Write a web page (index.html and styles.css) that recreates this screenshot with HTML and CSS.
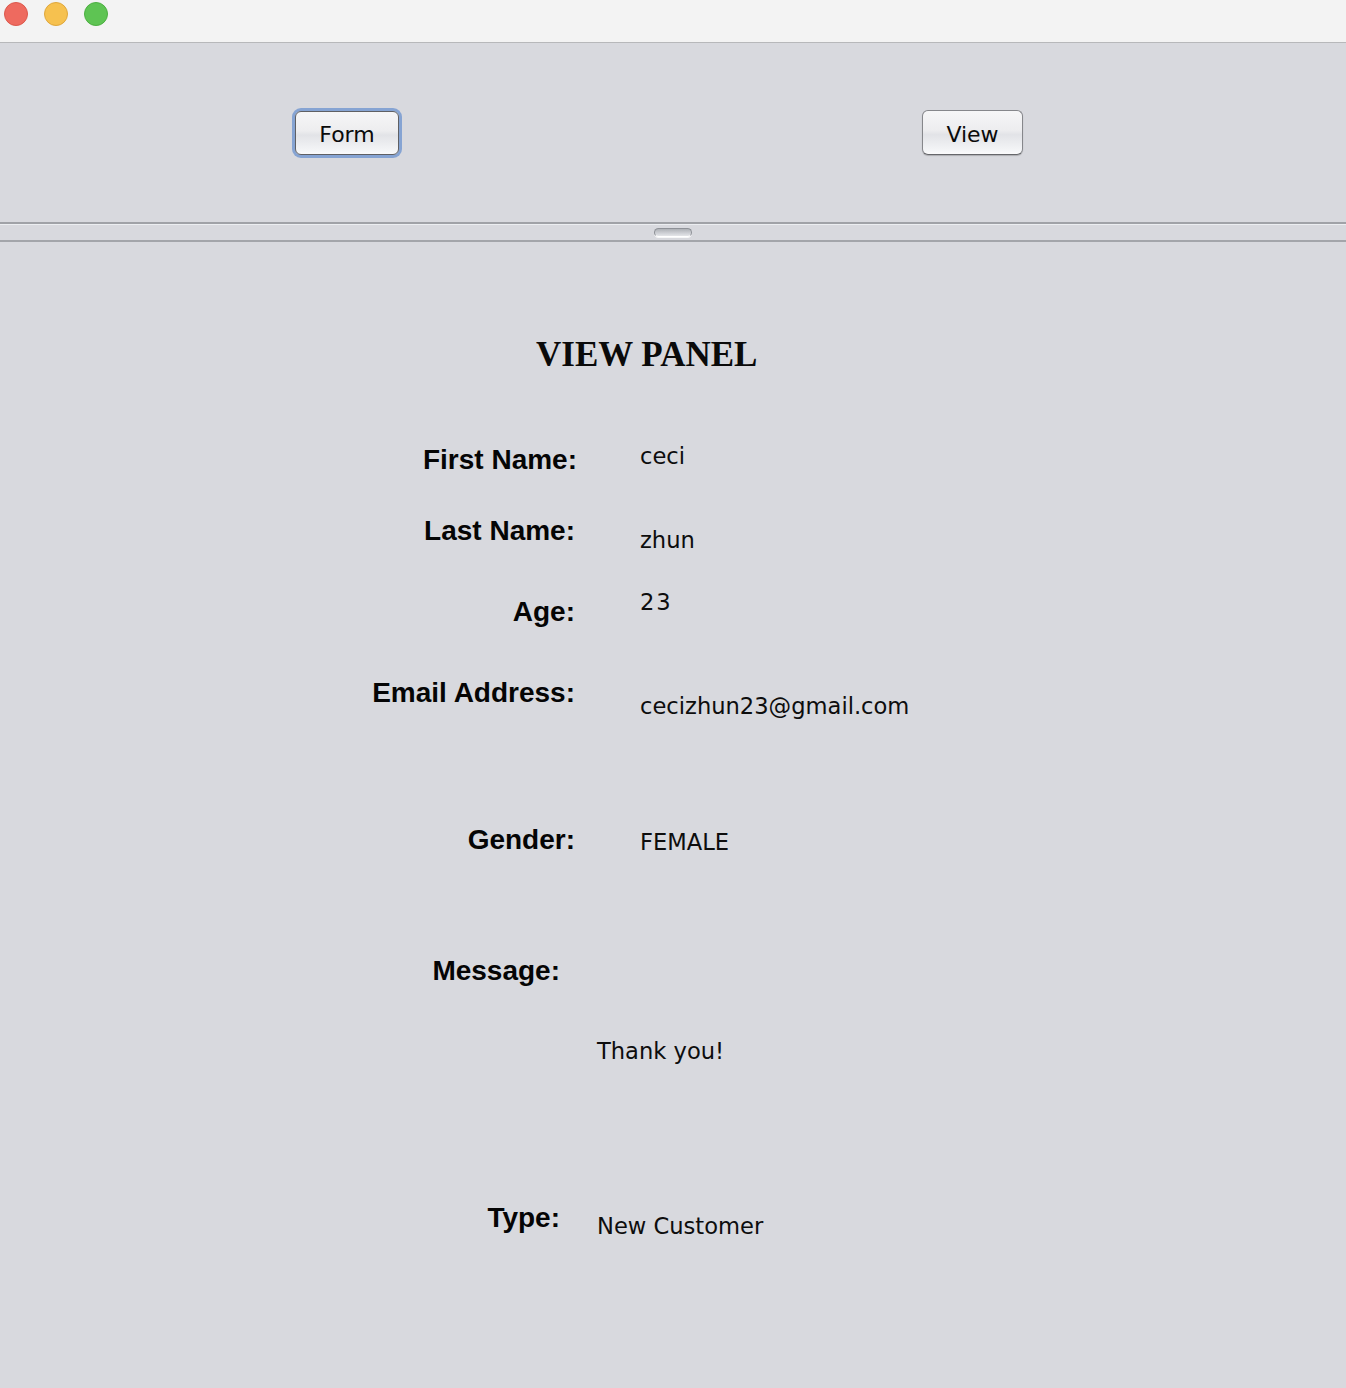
FILE: index.html
```html
<!DOCTYPE html>
<html lang="en">
<head>
<meta charset="utf-8">
<title>View Panel</title>
<link rel="stylesheet" href="styles.css">
</head>
<body>
<div class="window">
  <header class="titlebar">
    <span class="light red"></span>
    <span class="light yellow"></span>
    <span class="light green"></span>
  </header>
  <nav class="toolbar">
    <button class="btn btn-form focused">Form</button>
    <button class="btn btn-view">View</button>
  </nav>
  <div class="splitter"><span class="handle"></span></div>
  <main class="panel">
    <h1 class="title">VIEW PANEL</h1>
    <div class="row r1"><span class="label">First Name:</span><span class="value">ceci</span></div>
    <div class="row r2"><span class="label">Last Name:</span><span class="value">zhun</span></div>
    <div class="row r3"><span class="label">Age:</span><span class="value">23</span></div>
    <div class="row r4"><span class="label">Email Address:</span><span class="value">cecizhun23@gmail.com</span></div>
    <div class="row r5"><span class="label">Gender:</span><span class="value">FEMALE</span></div>
    <div class="row b r6"><span class="label">Message:</span></div>
    <div class="row b r7"><span class="value only">Thank you!</span></div>
    <div class="row b r8"><span class="label">Type:</span><span class="value">New Customer</span></div>
  </main>
</div>
</body>
</html>
```
FILE: styles.css
```css
html, body {
  margin: 0;
  padding: 0;
  background: #d8d9de;
}
.window {
  width: 1346px;
  min-height: 1388px;
  background: #d8d9de;
}
.titlebar {
  height: 43px;
  box-sizing: border-box;
  padding: 2px 0 0 4px;
  display: flex;
  align-items: flex-start;
  gap: 16px;
  background: #f3f3f3;
  border-bottom: 1px solid #b7b8ba;
}
.light {
  width: 24px;
  height: 24px;
  border-radius: 50%;
  box-sizing: border-box;
}
.red { background: #ee6a5f; border: 1px solid #dc584c; }
.yellow { background: #f6c14f; border: 1px solid #dfa73c; }
.green { background: #5ec453; border: 1px solid #4caf41; }

.toolbar {
  height: 179px;
  box-sizing: border-box;
  padding: 67px 0 0 295px;
  display: flex;
  align-items: flex-start;
  gap: 523px;
}
.btn {
  box-sizing: border-box;
  height: 45px;
  padding: 3px 0 0 0;
  line-height: 39px;
  font-family: "DejaVu Sans", sans-serif;
  font-size: 22px;
  color: #0a0a0a;
  border: 1px solid #86878b;
  border-bottom-color: #66676b;
  border-radius: 6px;
  background: linear-gradient(#f6f6f7 0%, #ededef 45%, #e2e3e7 55%, #f3f4f6 90%, #fbfbfc 100%);
  box-shadow: 0 1px 1px rgba(0,0,0,0.2);
  text-align: center;
}
.btn-form {
  width: 104px;
  margin-top: 1px;
  height: 44px;
  padding-top: 2px;
}
.btn-view {
  width: 101px;
}
.focused {
  border-color: #5f6064;
  box-shadow: 0 0 0 3px #86a4d3, 0 1px 1px rgba(0,0,0,0.2);
}

.splitter {
  height: 20px;
  box-sizing: border-box;
  border-top: 2px solid #a0a2a7;
  border-bottom: 2px solid #a3a5aa;
  box-shadow: inset 0 1px 0 #eceef1;
  display: flex;
  justify-content: center;
  padding-top: 4px;
}
.handle {
  width: 38px;
  height: 9px;
  box-sizing: border-box;
  border-radius: 5px;
  border: 1px solid #8e9197;
  border-bottom: 1px solid #ffffff;
  background: linear-gradient(#aeb1b6, #cfd1d6 60%, #e4e5e8);
  box-shadow: 0 1px 0 #f6f7f8;
}

.panel {
  display: flex;
  flex-direction: column;
  padding-bottom: 100px;
}
.title {
  margin: 93px 0 0 536px;
  font-family: "Liberation Serif", serif;
  font-weight: bold;
  font-size: 35px;
  line-height: 40px;
  color: #0a0a0a;
}
.row {
  display: flex;
  align-items: flex-start;
}
.label {
  width: 575px;
  text-align: right;
  font-family: "Liberation Sans", Arial, sans-serif;
  font-weight: bold;
  font-size: 28px;
  line-height: 32px;
  color: #050505;
}
.value {
  margin-left: 65px;
  font-family: "DejaVu Sans", sans-serif;
  font-size: 22.6px;
  line-height: 26px;
  color: #0d0d0d;
}
.row.b .label { width: 560px; }
.row.b .value { margin-left: 37px; }
.row.b .value.only { margin-left: 597px; }

.r1 { margin-top: 68px; }
.r1 .label { margin-top: 1px; width: 577px; }
.r1 .value { margin-left: 63px; }
.r2 { margin-top: 39px; }
.r2 .value { margin-top: 12px; }
.r3 { margin-top: 36px; }
.r3 .label { margin-top: 7px; }
.r3 .value { letter-spacing: 2px; }
.r4 { margin-top: 49px; }
.r4 .value { margin-top: 16px; }
.r5 { margin-top: 105px; }
.r5 .value { margin-top: 5px; }
.r6 { margin-top: 99px; }
.r7 { margin-top: 51px; }
.r8 { margin-top: 138px; }
.r8 .value { margin-top: 11px; }
```
